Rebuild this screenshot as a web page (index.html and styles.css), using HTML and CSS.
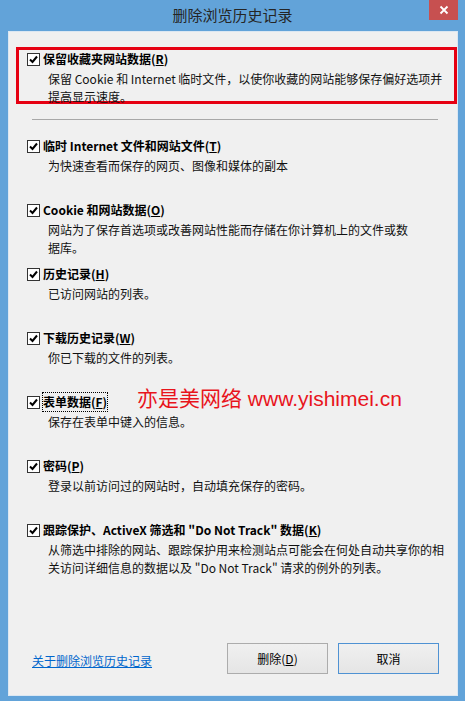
FILE: index.html
```html
<!DOCTYPE html>
<html lang="zh-CN">
<head>
  <meta charset="UTF-8" />
  <meta name="viewport" content="width=device-width, initial-scale=1.0"/>
  <title>删除浏览历史记录</title>
  <link rel="stylesheet" href="styles.css">
</head>
<body>
  <div class="window">
    <div class="titlebar">
      <span class="title">删除浏览历史记录</span>
      <button class="close" type="button" aria-label="关闭">
        <svg viewBox="0 0 10 10" width="10" height="10"><path d="M1.5 1.5 8.5 8.5M8.5 1.5 1.5 8.5" stroke="#fff" stroke-width="1.8" fill="none"/></svg>
      </button>
    </div>

    <div class="panel">
      <div class="keep">
        <label class="option-head keep-head">
          <span class="box"><svg viewBox="0 0 11 11" width="11" height="11"><path d="M2 5.5 4.5 8 9 2.5" fill="none" stroke="#000" stroke-width="2"/></svg></span>
          <b>保留收藏夹网站数据(<u>R</u>)</b>
        </label>
        <p class="option-desc keep-desc">保留 Cookie 和 Internet 临时文件，以使你收藏的网站能够保存偏好选项并<br>提高显示速度。</p>
      </div>

      <hr class="sep">

      <ul class="options">
        <li class="option">
          <label class="option-head">
            <span class="box"><svg viewBox="0 0 11 11" width="11" height="11"><path d="M2 5.5 4.5 8 9 2.5" fill="none" stroke="#000" stroke-width="2"/></svg></span>
            <b>临时 Internet 文件和网站文件(<u>T</u>)</b>
          </label>
          <p class="option-desc">为快速查看而保存的网页、图像和媒体的副本</p>
        </li>
        <li class="option">
          <label class="option-head">
            <span class="box"><svg viewBox="0 0 11 11" width="11" height="11"><path d="M2 5.5 4.5 8 9 2.5" fill="none" stroke="#000" stroke-width="2"/></svg></span>
            <b>Cookie 和网站数据(<u>O</u>)</b>
          </label>
          <p class="option-desc">网站为了保存首选项或改善网站性能而存储在你计算机上的文件或数<br>据库。</p>
        </li>
        <li class="option">
          <label class="option-head">
            <span class="box"><svg viewBox="0 0 11 11" width="11" height="11"><path d="M2 5.5 4.5 8 9 2.5" fill="none" stroke="#000" stroke-width="2"/></svg></span>
            <b>历史记录(<u>H</u>)</b>
          </label>
          <p class="option-desc">已访问网站的列表。</p>
        </li>
        <li class="option">
          <label class="option-head">
            <span class="box"><svg viewBox="0 0 11 11" width="11" height="11"><path d="M2 5.5 4.5 8 9 2.5" fill="none" stroke="#000" stroke-width="2"/></svg></span>
            <b>下载历史记录(<u>W</u>)</b>
          </label>
          <p class="option-desc">你已下载的文件的列表。</p>
        </li>
        <li class="option">
          <label class="option-head">
            <span class="box"><svg viewBox="0 0 11 11" width="11" height="11"><path d="M2 5.5 4.5 8 9 2.5" fill="none" stroke="#000" stroke-width="2"/></svg></span>
            <b class="focused">表单数据(<u>F</u>)</b>
          </label>
          <p class="option-desc">保存在表单中键入的信息。</p>
        </li>
        <li class="option">
          <label class="option-head">
            <span class="box"><svg viewBox="0 0 11 11" width="11" height="11"><path d="M2 5.5 4.5 8 9 2.5" fill="none" stroke="#000" stroke-width="2"/></svg></span>
            <b>密码(<u>P</u>)</b>
          </label>
          <p class="option-desc">登录以前访问过的网站时，自动填充保存的密码。</p>
        </li>
        <li class="option">
          <label class="option-head">
            <span class="box"><svg viewBox="0 0 11 11" width="11" height="11"><path d="M2 5.5 4.5 8 9 2.5" fill="none" stroke="#000" stroke-width="2"/></svg></span>
            <b>跟踪保护、ActiveX 筛选和 "Do Not Track" 数据(<u>K</u>)</b>
          </label>
          <p class="option-desc">从筛选中排除的网站、跟踪保护用来检测站点可能会在何处自动共享你的相<br>关访问详细信息的数据以及 "Do Not Track" 请求的例外的列表。</p>
        </li>
      </ul>

      <div class="footer">
        <a class="help" href="#">关于删除浏览历史记录</a>
        <div class="actions">
          <button class="btn" type="button">删除(<u>D</u>)</button>
          <button class="btn btn-default" type="button">取消</button>
        </div>
      </div>

      <div class="watermark">亦是美网络 www.yishimei.cn</div>
    </div>
  </div>
</body>
</html>
```

FILE: styles.css
```css
body {
  margin: 0;
  padding: 0;
  font-family: "Noto Sans CJK SC", "Noto Sans", sans-serif;
  font-size: 12px;
  color: #000;
}

.window {
  width: 465px;
  height: 701px;
  box-sizing: border-box;
  background-color: #62a3d9;
  padding: 0 7px 5px 8px;
  display: flex;
  flex-direction: column;
}

/* title bar */
.titlebar {
  height: 31px;
  flex: none;
  display: grid;
  grid-template-columns: 1fr auto 1fr;
  margin: 0 -7px 0 -8px;
}

.title {
  grid-column: 2;
  font-size: 15px;
  line-height: 30px;
  color: #252525;
}

.close {
  grid-column: 3;
  justify-self: end;
  align-self: start;
  width: 29px;
  height: 20px;
  margin-right: 7px;
  padding: 0;
  border: none;
  background-color: #c75050;
  display: flex;
  align-items: center;
  justify-content: center;
}

/* dialog body */
.panel {
  position: relative;
  flex: 1;
  background-color: #f0f0f0;
  border: 1px solid #dbe7f2;
  display: flex;
  flex-direction: column;
}

.keep {
  flex: none;
  height: 57px;
  box-sizing: border-box;
  margin: 15px 0 0 7px;
  border: 3px solid #e60012;
  padding: 0 0 0 8px;
}

.keep-head {
  height: 13px;
  line-height: 13px;
}

.keep-desc {
  margin-top: 0;
  margin-bottom: 0;
  line-height: 17px;
}

.option-head {
  display: flex;
  align-items: center;
  gap: 3px;
  height: 18px;
  line-height: 18px;
  white-space: nowrap;
}

.option-head b {
  font-weight: bold;
}

.box {
  width: 11px;
  height: 11px;
  border: 1px solid #333;
  background-color: #fff;
  display: flex;
  flex: none;
}

.option-desc {
  margin: 2px 0 0 21px;
  line-height: 18px;
  white-space: nowrap;
  color: #111;
}

.sep {
  flex: none;
  margin: 15px 19px 0 23px;
  border: none;
  border-top: 1px solid #a8a8a8;
  height: 0;
}

.options {
  list-style: none;
  margin: 17px 0 0;
  padding: 0 0 0 18px;
}

.option {
  height: 64px;
}

.focused {
  outline: 1px dotted #000;
  outline-offset: 0;
}

/* footer */
.footer {
  margin-top: 58px;
  padding: 0 18px 0 23px;
  display: flex;
  justify-content: space-between;
  align-items: center;
}

.help {
  color: #0066cc;
  text-decoration: underline;
  margin-top: 3px;
}

.actions {
  display: flex;
  gap: 10px;
}

.btn {
  width: 101px;
  height: 31px;
  font-family: inherit;
  font-size: 12px;
  color: #000;
  background: linear-gradient(#f0f0f0, #e5e5e5);
  border: 1px solid #acacac;
  padding: 0;
}

.btn-default {
  border-color: #4f92d3;
}

/* site mark over the form */
.watermark {
  position: absolute;
  left: 128px;
  top: 354px;
  font-family: "Liberation Sans", "Noto Sans CJK SC", sans-serif;
  font-size: 21px;
  line-height: 26px;
  color: #e8141c;
  white-space: nowrap;
}
```
